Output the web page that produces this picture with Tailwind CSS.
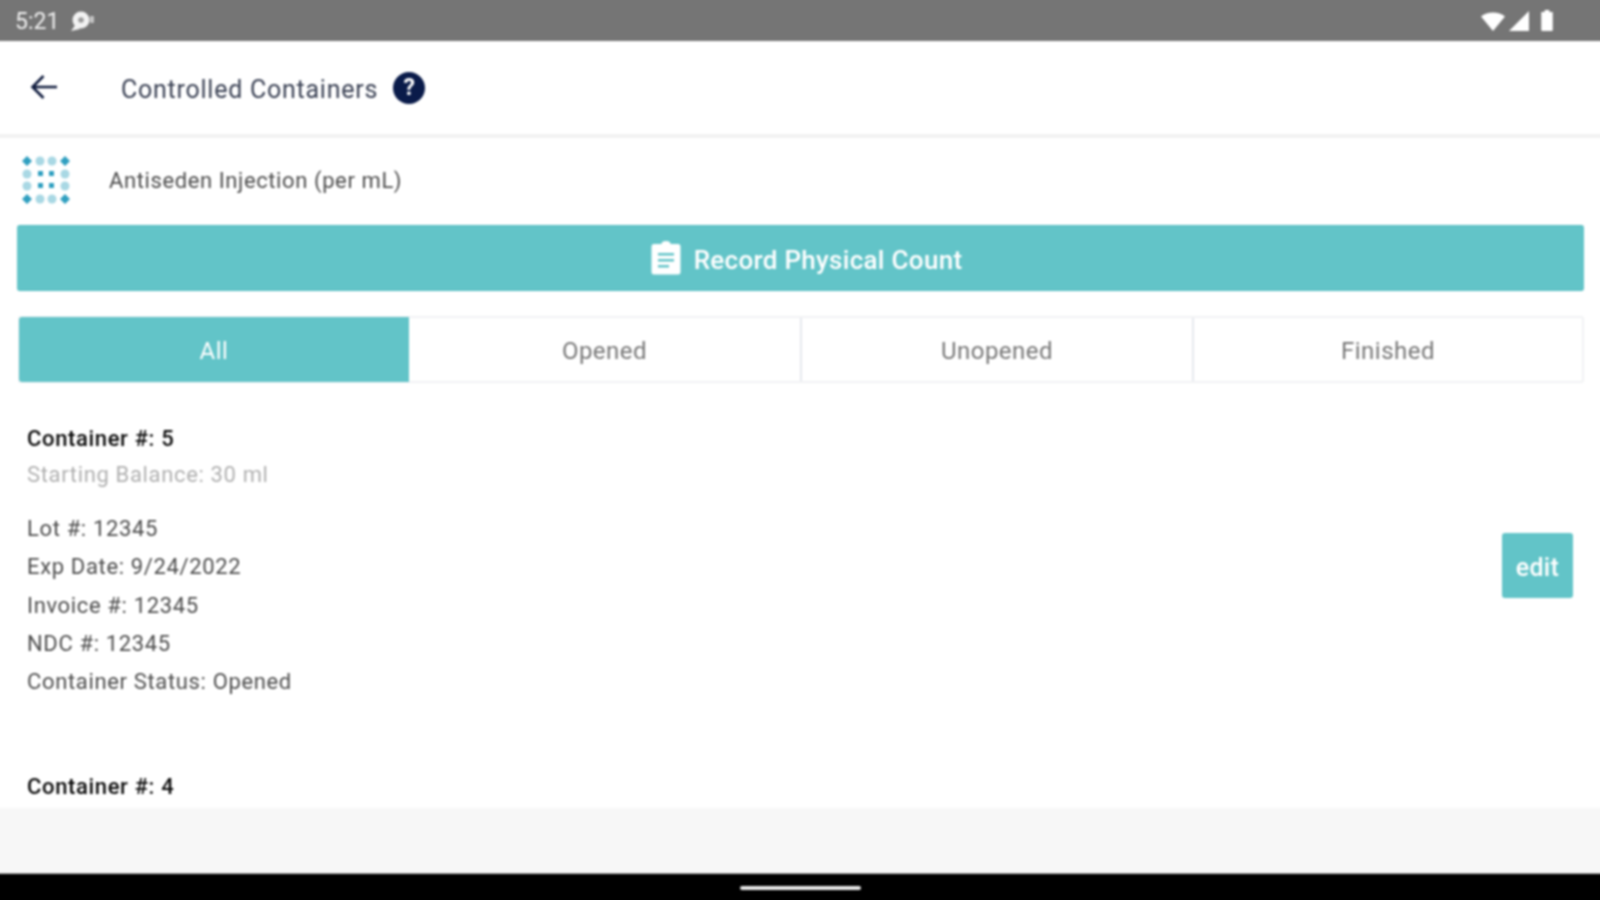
<!DOCTYPE html>
<html>
<head>
<meta charset="utf-8">
<script src="https://cdn.jsdelivr.net/npm/@tailwindcss/browser@4"></script>
</head>
<body class="bg-white overflow-hidden">
<div class="w-[1600px] h-[900px] overflow-hidden">
<div class="w-[1608px] h-[908px] -ml-[4px] -mt-[4px] flex flex-col overflow-hidden font-['Roboto',sans-serif] bg-white blur-[0.8px]">
  <!-- status bar -->
  <div class="h-[45px] pt-[4px] shrink-0 bg-[#757575] flex items-center pl-[19px] pr-[50px] text-white">
    <span class="text-[23px] leading-none text-[#f0f0f0] mt-[2px]">5:21</span>
    <svg class="ml-[11px] w-[26px] h-[22px]" viewBox="0 0 26 22"><circle cx="11" cy="10" r="8.500" fill="#f2f2f2"/><path d="M1 21l5-7 4 5z" fill="#f2f2f2"/><circle cx="11" cy="10" r="2.800" fill="#9a9a9a"/><rect x="20" y="6" width="4" height="7" rx="1" fill="#c4c4c4"/></svg>
    <div class="ml-auto flex items-center">
      <svg class="w-[26px] h-[22px]" viewBox="0 0 26 22"><path d="M1 6.500C7 1 19 1 25 6.500L13 21z" fill="#fff"/></svg>
      <svg class="w-[22px] h-[22px] ml-[2px]" viewBox="0 0 22 22"><path d="M21 1V21H1z" fill="#fff"/></svg>
      <svg class="w-[14px] h-[23px] ml-[10px]" viewBox="0 0 14 24"><path d="M4.500 1h5v2H13v19a1 1 0 0 1-1 1H2a1 1 0 0 1-1-1V3h3.500z" fill="#fff"/></svg>
    </div>
  </div>
  <!-- header -->
  <div class="h-[97px] shrink-0 flex items-center border-b-[4px] border-[#f2f2f2] pb-[1px]">
    <svg class="ml-[34px] -mt-[1px] w-[28px] h-[28px] text-[#0f1b3d]" viewBox="0 0 28 28" fill="none" stroke="currentColor" stroke-width="2.600"><path d="M27 14H3M13.500 3 2.500 14l11 11"/></svg>
    <span class="ml-[63px] mt-[4px] text-[25px] leading-none text-[#3a4154] tracking-[0.75px]">Controlled Containers</span>
    <span class="ml-[15px] mt-[1px] w-[32px] h-[32px] rounded-full bg-[#0a1b4a] text-white text-[23px] font-bold flex items-center justify-center leading-none">?</span>
  </div>
  <!-- product row -->
  <div class="h-[88px] shrink-0 flex items-center pl-[26px] -mt-[1px]">
    <svg class="w-[48px] h-[48px] -mt-[2px]" viewBox="0 0 48 48">
      <g fill="#2f9fc0"><path d="M5 0l5 5-5 5-5-5zM43 0l5 5-5 5-5-5zM5 38l5 5-5 5-5-5zM43 38l5 5-5 5-5-5z"/><rect x="16" y="15" width="5" height="5"/><rect x="27" y="15" width="5" height="5"/><rect x="16" y="27" width="5" height="5"/><rect x="27" y="27" width="5" height="5"/></g>
      <g fill="#a9d8e4"><circle cx="18" cy="5" r="4.500"/><circle cx="30" cy="5" r="4.500"/><circle cx="18" cy="43" r="4.500"/><circle cx="30" cy="43" r="4.500"/><circle cx="5" cy="18" r="4.500"/><circle cx="5" cy="30" r="4.500"/><circle cx="43" cy="18" r="4.500"/><circle cx="43" cy="30" r="4.500"/></g>
    </svg>
    <span class="ml-[39px] text-[22px] leading-none text-[#4d4d4d] tracking-[0.6px]">Antiseden Injection (per mL)</span>
  </div>
  <!-- main button -->
  <div class="pl-[21px] pr-[20px] shrink-0">
    <div class="h-[66px] rounded-[3px] bg-[#62c4c8] border-y border-[#54bcc0] flex items-center justify-center text-white pl-[12px]">
      <svg class="w-[30px] h-[34px] mr-[13px]" viewBox="0 0 30 34"><path d="M3 3h7.500a4.500 3 0 0 1 9 0H27a2.500 2.500 0 0 1 2.500 2.500V31a2.500 2.500 0 0 1-2.500 2.500H3A2.500 2.500 0 0 1 .5 31V5.500A2.500 2.500 0 0 1 3 3z" fill="#fff"/><path d="M7 12h16v2.500H7zM7 18h16v2.500H7zM7 24h11v2.500H7z" fill="#62c4c8"/></svg>
      <span class="text-[26px] font-medium leading-none tracking-[0.3px] mt-[3px]">Record Physical Count</span>
    </div>
  </div>
  <!-- tabs -->
  <div class="mt-[25px] ml-[22px] mr-[20px] h-[67px] shrink-0 grid grid-cols-[389px_391px_392px_1fr] border-2 border-[#f1f2f4] rounded-[3px] text-[24px] text-[#777] tracking-[0.5px]">
    <div class="-my-[1px] -ml-[1px] pt-[2px] bg-[#62c4c8] text-white flex items-center justify-center rounded-l-[3px]">All</div>
    <div class="pt-[2px] flex items-center justify-center">Opened</div>
    <div class="pt-[2px] flex items-center justify-center border-l-2 border-[#e6e8ee]">Unopened</div>
    <div class="pt-[2px] flex items-center justify-center border-l-2 border-[#e6e8ee]">Finished</div>
  </div>
  <!-- list -->
  <div class="flex-1 min-h-0 overflow-hidden pl-[31px] pr-[31px] pt-[38px] text-[22px] leading-[38.300px] text-[#4d4d4d] tracking-[0.65px]">
    <div class="flex items-center">
      <div class="flex-1">
        <div class="font-medium text-[#0a0a0a] leading-[36px]">Container #: 5</div>
        <div class="text-[#b0b0b0] leading-[35px] mb-[18px]">Starting Balance: 30 ml</div>
        <div>Lot #: 12345</div>
        <div>Exp Date: 9/24/2022</div>
        <div>Invoice #: 12345</div>
        <div>NDC #: 12345</div>
        <div>Container Status: Opened</div>
      </div>
      <div class="w-[71px] h-[65px] mt-[9px] pt-[3px] rounded-[3px] bg-[#62c4c8] text-white text-[25px] font-medium flex items-center justify-center leading-none tracking-[0.3px]">edit</div>
    </div>
    <div class="font-medium text-[#0a0a0a] leading-[36px] mt-[68px]">Container #: 4</div>
  </div>
  <!-- footer -->
  <div class="h-[65px] shrink-0 bg-[#f7f7f7]"></div>
  <div class="h-[31px] shrink-0 bg-black flex items-start justify-center border-t border-[#aaa]">
    <div class="mt-[12px] w-[121px] h-[4px] rounded-full bg-[#e8e8e8]"></div>
  </div>
</div>
</div>
</body>
</html>
